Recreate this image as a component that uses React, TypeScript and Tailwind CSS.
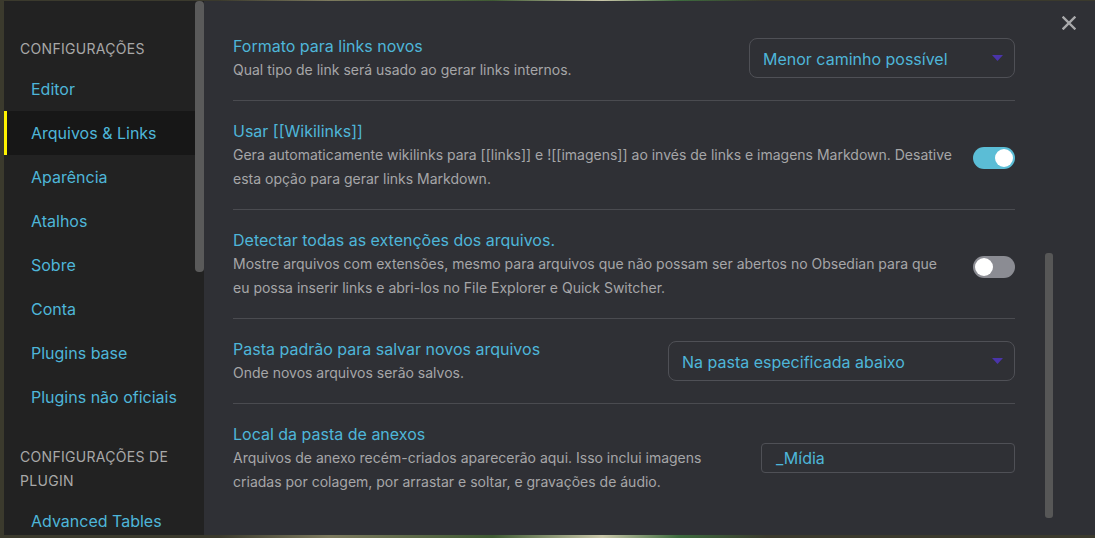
import React from "react";

const FONT = { fontFamily: "Inter, 'Noto Sans', sans-serif" };

function Toggle({ on }: { on: boolean }) {
  return (
    <div
      className={`w-[42px] h-[22px] rounded-full flex items-center px-[2px] shrink-0 mt-[6px] ${
        on ? "bg-[#5bbdd6] justify-end" : "bg-[#8b8c93] justify-start"
      }`}
    >
      <div className="w-[18px] h-[18px] rounded-full bg-white" />
    </div>
  );
}

function Select({ text, w }: { text: string; w: string }) {
  return (
    <div
      className={`${w} h-[40px] shrink-0 rounded-[8px] border border-[#4f5056] flex items-center justify-between pl-[13px] pr-[11px]`}
    >
      <span className="text-[16px] text-[#4eb6d9] mt-px">{text}</span>
      <svg width="11" height="6" viewBox="0 0 11 6" className="mt-[-1px]">
        <polygon points="0,0 11,0 5.5,6" fill="#4a34aa" />
      </svg>
    </div>
  );
}

function Setting({
  title,
  desc,
  control,
  last,
}: {
  title: string;
  desc: string;
  control: React.ReactNode;
  last?: boolean;
}) {
  return (
    <div
      className={`flex items-center gap-[20px] py-[18px] ${
        last ? "" : "border-b border-[#4a4b50]"
      }`}
    >
      <div className="flex-1 min-w-0">
        <div className="text-[16px] leading-[24px] text-[#4eb6d9]">{title}</div>
        <div className="text-[14px] leading-[24px] text-[#a6a6a8]">{desc}</div>
      </div>
      {control}
    </div>
  );
}

const items = [
  "Editor",
  "Arquivos & Links",
  "Aparência",
  "Atalhos",
  "Sobre",
  "Conta",
  "Plugins base",
  "Plugins não oficiais",
];

export default function App() {
  return (
    <div
      className="w-[1095px] h-[538px] overflow-hidden bg-[linear-gradient(90deg,#3b3a2d_0%,#3b3a2d_20%,#7d7a5e_30%,#3f5a33_45%,#c9c6a8_55%,#3d6b3e_62%,#3b3a2d_70%,#3b3a2d_100%)] pt-px pl-[4px]"
      style={FONT}
    >
      <div className="h-[534px] flex relative overflow-hidden">
        {/* Sidebar */}
        <div className="w-[200px] shrink-0 bg-[#222222] relative overflow-hidden pt-[36px]">
          <div className="absolute right-[0px] top-0 w-[9px] h-[271px] rounded-[4px] bg-[#5a5a5a]" />
          <div className="pl-[16px] text-[14px] leading-[24px] text-[#a8a8a8] tracking-[0.3px] mb-[6px]">
            CONFIGURAÇÕES
          </div>
          {items.map((it) => {
            const active = it === "Arquivos & Links";
            return (
              <div
                key={it}
                className={`h-[44px] w-[191px] flex items-center pl-[27px] text-[16px] text-[#4eb6d9] relative ${
                  active ? "bg-[#171717]" : ""
                }`}
              >
                {active && (
                  <div className="absolute left-0 top-0 bottom-0 w-[3px] bg-[#fff200]" />
                )}
                {it}
              </div>
            );
          })}
          <div className="pl-[16px] pr-[20px] mt-[26px] mb-[6px] text-[14px] leading-[24px] text-[#a8a8a8] tracking-[0.3px]">
            CONFIGURAÇÕES DE PLUGIN
          </div>
          <div className="h-[44px] flex items-center pl-[27px] text-[16px] text-[#4eb6d9]">
            Advanced Tables
          </div>
        </div>

        {/* Content */}
        <div className="flex-1 bg-[#2f3035] relative">
          <div className="w-[782px] ml-[29px] pt-[15px]">
            <Setting
              title="Formato para links novos"
              desc="Qual tipo de link será usado ao gerar links internos."
              control={<Select text="Menor caminho possível" w="w-[266px]" />}
            />
            <Setting
              title="Usar [[Wikilinks]]"
              desc="Gera automaticamente wikilinks para [[links]] e ![[imagens]] ao invés de links e imagens Markdown. Desative esta opção para gerar links Markdown."
              control={<Toggle on />}
            />
            <Setting
              title="Detectar todas as extenções dos arquivos."
              desc="Mostre arquivos com extensões, mesmo para arquivos que não possam ser abertos no Obsedian para que eu possa inserir links e abri-los no File Explorer e Quick Switcher."
              control={<Toggle on={false} />}
            />
            <Setting
              title="Pasta padrão para salvar novos arquivos"
              desc="Onde novos arquivos serão salvos."
              control={<Select text="Na pasta especificada abaixo" w="w-[347px]" />}
            />
            <Setting
              title="Local da pasta de anexos"
              desc="Arquivos de anexo recém-criados aparecerão aqui. Isso inclui imagens criadas por colagem, por arrastar e soltar, e gravações de áudio."
              control={
                <div className="w-[254px] h-[30px] shrink-0 rounded-[4px] border border-[#4f5056] flex items-center pl-[14px] text-[16px] text-[#4eb6d9]">
                  _Mídia
                </div>
              }
              last
            />
          </div>
          {/* scrollbar */}
          <div className="absolute left-[841px] top-[252px] w-[8px] h-[265px] rounded-[3px] bg-[#575757]" />
          {/* close */}
          <svg
            className="absolute left-[858px] top-[15px]"
            width="14"
            height="14"
            viewBox="0 0 14 14"
          >
            <path d="M1.5 1.5 L12.5 12.5 M12.5 1.5 L1.5 12.5" stroke="#a9a9ab" strokeWidth="2.4" strokeLinecap="square" />
          </svg>
        </div>
      </div>
    </div>
  );
}
